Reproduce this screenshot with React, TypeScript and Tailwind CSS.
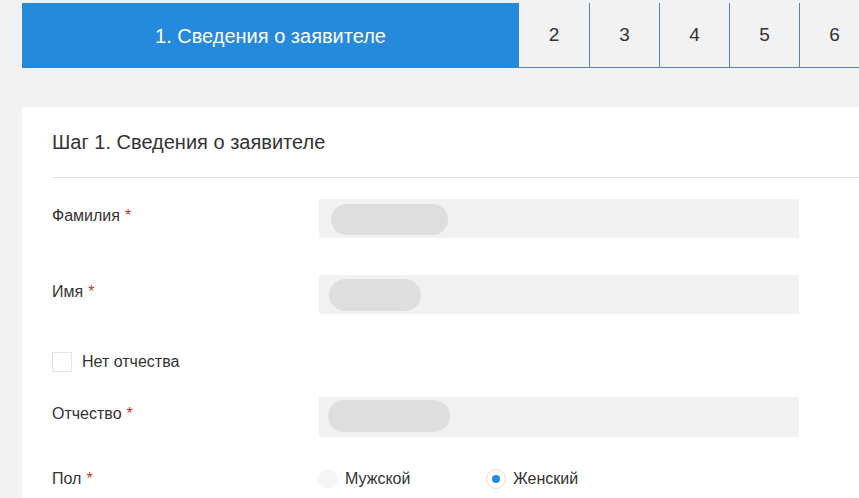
import React from "react";

const Req = () => <span className="text-[#c0392b] ml-[5px]">*</span>;

export default function App() {
  return (
    <div
      className="w-[859px] h-[498px] overflow-hidden bg-[#f2f2f2] pt-[3px] pl-[22px]"
      style={{ fontFamily: '"Liberation Sans", Arial, sans-serif' }}
    >
      <div className="flex h-[65px] w-[900px]">
        <div className="w-[497px] shrink-0 bg-[#2589dc] flex items-center justify-center text-white text-[20px]">
          1. Сведения о заявителе
        </div>
        {["2", "3", "4", "5", "6"].map((n, i) => (
          <div
            key={n}
            className={`w-[70px] shrink-0 flex items-center justify-center text-[19px] text-[#333] border-b border-[#5583b3] ${i > 0 ? "border-l" : ""}`}
          >
            {n}
          </div>
        ))}
      </div>
      <div className="mt-[39px] bg-white w-[900px] h-[400px] pl-[30px] text-[#333]">
        <div className="pt-[24px] text-[20px] leading-[22px] h-[70px]">Шаг 1. Сведения о заявителе</div>
        <div className="h-px bg-[#e3e3e3] w-[850px]" />
        <div className="flex mt-[21px] h-[39px] text-[16px] leading-[18px]">
          <div className="w-[267px] pt-[8px]">
            Фамилия<Req />
          </div>
          <div className="w-[480px] bg-[#f2f2f2] pl-[12px] pt-[5px]">
            <div className="w-[117px] h-[31px] rounded-full bg-[#dedede]" />
          </div>
        </div>
        <div className="flex mt-[37px] h-[39px] text-[16px] leading-[18px]">
          <div className="w-[267px] pt-[8px]">
            Имя<Req />
          </div>
          <div className="w-[480px] bg-[#f2f2f2] pl-[10px] pt-[4px]">
            <div className="w-[92px] h-[32px] rounded-full bg-[#dedede]" />
          </div>
        </div>
        <div className="flex items-center mt-[38px] h-[20px] text-[16px]">
          <div className="w-[20px] h-[20px] border border-[#e4e4e4] bg-white" />
          <span className="ml-[10px]">Нет отчества</span>
        </div>
        <div className="flex mt-[25px] h-[40px] text-[16px] leading-[18px]">
          <div className="w-[267px] pt-[8px]">
            Отчество<Req />
          </div>
          <div className="w-[480px] bg-[#f2f2f2] pl-[9px] pt-[3px]">
            <div className="w-[122px] h-[32px] rounded-full bg-[#dedede]" />
          </div>
        </div>
        <div className="flex items-center mt-[32px] h-[20px] text-[16px]">
          <div className="w-[266px]">
            Пол<Req />
          </div>
          <div className="w-[20px] h-[20px] rounded-full bg-[#f6f6f6]" />
          <span className="ml-[7px] w-[141px]">Мужской</span>
          <div className="w-[20px] h-[20px] rounded-full bg-white border border-[#ead9cf] flex items-center justify-center">
            <div className="w-[8px] h-[8px] rounded-full bg-[#2589dc]" />
          </div>
          <span className="ml-[7px]">Женский</span>
        </div>
      </div>
    </div>
  );
}
